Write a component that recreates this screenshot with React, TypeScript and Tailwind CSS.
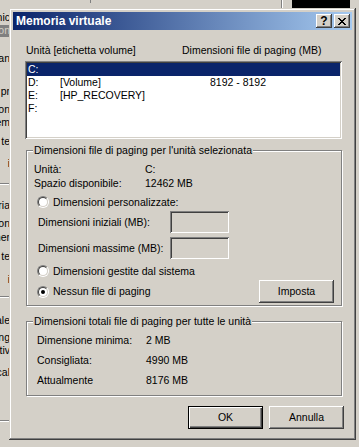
import React from "react";

const raised =
  "shadow-[inset_-1px_-1px_0_#404040,inset_1px_1px_0_#ffffff,inset_-2px_-2px_0_#808080,inset_2px_2px_0_#d4d0c8]";

function Radio({ checked }: { checked?: boolean }) {
  return (
    <span className="flex h-[12px] w-[12px] shrink-0 rounded-full border border-t-[#808080] border-l-[#808080] border-r-white border-b-white">
      <span className="flex h-full w-full items-center justify-center rounded-full border border-t-[#404040] border-l-[#404040] border-r-[#d4d0c8] border-b-[#d4d0c8] bg-white">
        {checked && <span className="h-[4px] w-[4px] rounded-full bg-black" />}
      </span>
    </span>
  );
}

function Background() {
  return (
    <>
      {/* top strip of window behind */}
      <div className="absolute left-[90px] top-0 h-[3px] w-[1px] bg-[#808080]" />
      <div className="absolute left-[281px] top-0 h-[8px] w-[1px] bg-[#808080]" />
      <div className="absolute left-[282px] top-0 h-[8px] w-[1px] bg-white" />
      <div className="absolute left-[292px] top-0 h-[8px] w-[58px] bg-black" />
      {/* left strip of window behind */}
      <div className="absolute left-0 top-0 h-full w-[10px] overflow-hidden">
        <div className="absolute right-0 top-[11px] whitespace-nowrap">nic</div>
        <div className="absolute left-0 top-[25px] h-[12px] w-[10px] bg-[#808080]" />
        <div className="absolute right-0 top-[24px] whitespace-nowrap text-[#d4d0c8]">on</div>
        <div className="absolute right-0 top-[52px] whitespace-nowrap">an</div>
        <div className="absolute right-0 top-[85px] whitespace-nowrap">pr</div>
        <div className="absolute right-0 top-[103px] whitespace-nowrap">on</div>
        <div className="absolute right-0 top-[116px] whitespace-nowrap">em</div>
        <div className="absolute right-0 top-[135px] whitespace-nowrap">te</div>
        <div className="absolute right-0 top-[157px] whitespace-nowrap">i</div>
        <div className="absolute left-0 top-[183px] h-[1px] w-[10px] bg-[#808080]" />
        <div className="absolute left-0 top-[184px] h-[1px] w-[10px] bg-white" />
        <div className="absolute right-0 top-[199px] whitespace-nowrap">ria</div>
        <div className="absolute right-0 top-[217px] whitespace-nowrap">on</div>
        <div className="absolute right-0 top-[231px] whitespace-nowrap">mer</div>
        <div className="absolute right-0 top-[250px] whitespace-nowrap">te</div>
        <div className="absolute right-0 top-[273px] whitespace-nowrap">i</div>
        <div className="absolute left-0 top-[296px] h-[1px] w-[10px] bg-[#808080]" />
        <div className="absolute left-0 top-[297px] h-[1px] w-[10px] bg-white" />
        <div className="absolute right-0 top-[314px] whitespace-nowrap">ale</div>
        <div className="absolute right-0 top-[331px] whitespace-nowrap">ng</div>
        <div className="absolute right-0 top-[344px] whitespace-nowrap">ativ</div>
        <div className="absolute right-0 top-[366px] whitespace-nowrap">cal</div>
        <div className="absolute left-0 top-[420px] h-[1px] w-[10px] bg-[#808080]" />
        <div className="absolute left-0 top-[421px] h-[1px] w-[10px] bg-white" />
      </div>
    </>
  );
}

export default function App() {
  return (
    <div className="relative h-[447px] w-[359px] overflow-hidden bg-[#d4d0c8] font-['Liberation_Sans',Arial,sans-serif] text-[10.5px] leading-[13px] text-black">
      <Background />

      {/* dialog window */}
      <div className="absolute left-[9px] top-[8px] flex h-[432px] w-[347px] flex-col bg-[#d4d0c8] p-[4px] shadow-[inset_-1px_-1px_0_#404040,inset_1px_1px_0_#d4d0c8,inset_-2px_-2px_0_#808080,inset_2px_2px_0_#ffffff]">
        {/* title bar */}
        <div className="flex h-[18px] items-center bg-linear-to-r/srgb from-[#0a246a] to-[#a6caf0] pl-[3px] pr-[2px]">
          <span className="text-[12px] font-bold leading-none text-white">Memoria virtuale</span>
          <div className="ml-auto flex gap-[2px]">
            <div className={`flex h-[14px] w-[16px] items-center justify-center bg-[#d4d0c8] ${raised}`}>
              <span className="text-[12px] font-bold leading-none text-black">?</span>
            </div>
            <div className={`flex h-[14px] w-[16px] items-center justify-center bg-[#d4d0c8] ${raised}`}>
              <svg width="8" height="7" viewBox="0 0 8 7" shapeRendering="crispEdges">
                <path
                  fill="#000"
                  d="M0 0h2v1H0z M6 0h2v1H6z M1 1h2v1H1z M5 1h2v1H5z M2 2h4v1H2z M3 3h2v1H3z M2 4h4v1H2z M1 5h2v1H1z M5 5h2v1H5z M0 6h2v1H0z M6 6h2v1H6z"
                />
              </svg>
            </div>
          </div>
        </div>

        {/* body */}
        <div className="flex flex-col pl-[12px]">
          {/* column headers */}
          <div className="ml-[1px] mt-[14px] flex h-[13px] whitespace-nowrap">
            <span className="w-[156px]">Unità [etichetta volume]</span>
            <span>Dimensioni file di paging (MB)</span>
          </div>

          {/* drive list */}
          <div className="mt-[4px] h-[78px] w-[317px] bg-white p-[2px] shadow-[inset_1px_1px_0_#808080,inset_-1px_-1px_0_#ffffff,inset_2px_2px_0_#404040,inset_-2px_-2px_0_#d4d0c8]">
            <div className="flex h-[13px] items-center whitespace-nowrap bg-[#0a246a] text-white">
              <span className="w-[33px] pl-[1px]">C:</span>
              <span className="w-[150px]"></span>
              <span></span>
            </div>
            <div className="flex h-[13px] items-center whitespace-nowrap">
              <span className="w-[33px] pl-[1px]">D:</span>
              <span className="w-[150px]">[Volume]</span>
              <span>8192 - 8192</span>
            </div>
            <div className="flex h-[13px] items-center whitespace-nowrap">
              <span className="w-[33px] pl-[1px]">E:</span>
              <span className="w-[150px]">[HP_RECOVERY]</span>
              <span></span>
            </div>
            <div className="flex h-[13px] items-center whitespace-nowrap">
              <span className="w-[33px] pl-[1px]">F:</span>
            </div>
          </div>

          {/* group: selected drive */}
          <div className="relative ml-[1px] mt-[11px] w-[316px] border border-[#808080] pb-[2px] pt-[11px] shadow-[inset_1px_1px_0_#ffffff,1px_1px_0_#ffffff]">
            <span className="absolute left-[6px] top-[-7px] whitespace-nowrap bg-[#d4d0c8] px-[1px] leading-[13px]">
              Dimensioni file di paging per l'unità selezionata
            </span>
            <div className="flex h-[14px] items-center whitespace-nowrap">
              <span className="w-[118px] pl-[7px]">Unità:</span>
              <span>C:</span>
            </div>
            <div className="flex h-[14px] items-center whitespace-nowrap">
              <span className="w-[118px] pl-[7px]">Spazio disponibile:</span>
              <span>12462 MB</span>
            </div>
            <div className="mt-[5px] flex h-[14px] items-center gap-[4px] whitespace-nowrap pl-[10px]">
              <Radio />
              <span>Dimensioni personalizzate:</span>
            </div>
            <div className="mt-[2px] flex h-[22px] items-center whitespace-nowrap">
              <span className="w-[143px] pl-[11px]">Dimensioni iniziali (MB):</span>
              <div className="h-[22px] w-[59px] bg-[#d4d0c8] shadow-[inset_1px_1px_0_#808080,inset_-1px_-1px_0_#ffffff,inset_2px_2px_0_#404040,inset_-2px_-2px_0_#d4d0c8]" />
            </div>
            <div className="mt-[4px] flex h-[22px] items-center whitespace-nowrap">
              <span className="w-[143px] pl-[11px]">Dimensioni massime (MB):</span>
              <div className="h-[22px] w-[59px] bg-[#d4d0c8] shadow-[inset_1px_1px_0_#808080,inset_-1px_-1px_0_#ffffff,inset_2px_2px_0_#404040,inset_-2px_-2px_0_#d4d0c8]" />
            </div>
            <div className="mt-[5px] flex h-[14px] items-center gap-[4px] whitespace-nowrap pl-[10px]">
              <Radio />
              <span>Dimensioni gestite dal sistema</span>
            </div>
            <div className="mt-[2px] flex h-[23px] items-center whitespace-nowrap pl-[10px]">
              <div className="flex items-center gap-[4px]">
                <Radio checked />
                <span>Nessun file di paging</span>
              </div>
              <div className={`ml-auto mr-[7px] flex h-[23px] w-[75px] items-center justify-center bg-[#d4d0c8] ${raised}`}>
                Imposta
              </div>
            </div>
          </div>

          {/* group: totals */}
          <div className="relative ml-[1px] mt-[15px] w-[316px] border border-[#808080] pb-[5px] pt-[8px] shadow-[inset_1px_1px_0_#ffffff,1px_1px_0_#ffffff]">
            <span className="absolute left-[6px] top-[-7px] whitespace-nowrap bg-[#d4d0c8] px-[1px] leading-[13px]">
              Dimensioni totali file di paging per tutte le unità
            </span>
            <div className="flex h-[20px] items-center whitespace-nowrap">
              <span className="w-[119px] pl-[10px]">Dimensione minima:</span>
              <span>2 MB</span>
            </div>
            <div className="flex h-[20px] items-center whitespace-nowrap">
              <span className="w-[119px] pl-[10px]">Consigliata:</span>
              <span>4990 MB</span>
            </div>
            <div className="flex h-[20px] items-center whitespace-nowrap">
              <span className="w-[119px] pl-[10px]">Attualmente</span>
              <span>8176 MB</span>
            </div>
          </div>

          {/* dialog buttons */}
          <div className="mt-[10px] flex justify-end gap-[6px] pr-[8px]">
            <div className="flex h-[23px] w-[75px] items-center justify-center border border-black bg-[#d4d0c8] shadow-[inset_1px_1px_0_#ffffff,inset_-1px_-1px_0_#404040,inset_-2px_-2px_0_#808080]">
              OK
            </div>
            <div className={`flex h-[23px] w-[75px] items-center justify-center bg-[#d4d0c8] ${raised}`}>
              Annulla
            </div>
          </div>
        </div>
      </div>
    </div>
  );
}
